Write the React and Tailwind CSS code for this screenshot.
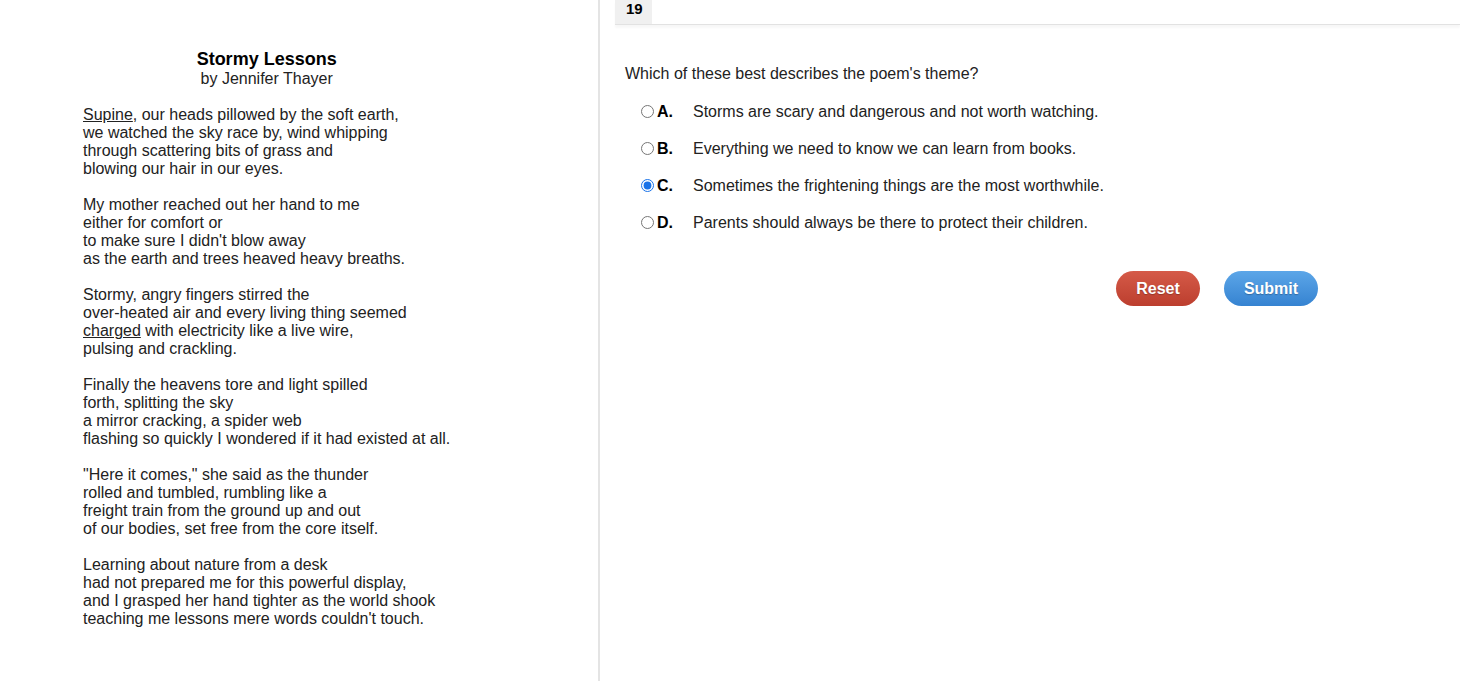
import React from "react";

const poemStanzas = [
  [
    <>
      <span className="underline">Supine</span>, our heads pillowed by the soft earth,
    </>,
    "we watched the sky race by, wind whipping",
    "through scattering bits of grass and",
    "blowing our hair in our eyes.",
  ],
  [
    "My mother reached out her hand to me",
    "either for comfort or",
    "to make sure I didn't blow away",
    "as the earth and trees heaved heavy breaths.",
  ],
  [
    "Stormy, angry fingers stirred the",
    "over-heated air and every living thing seemed",
    <>
      <span className="underline">charged</span> with electricity like a live wire,
    </>,
    "pulsing and crackling.",
  ],
  [
    "Finally the heavens tore and light spilled",
    "forth, splitting the sky",
    "a mirror cracking, a spider web",
    "flashing so quickly I wondered if it had existed at all.",
  ],
  [
    "\"Here it comes,\" she said as the thunder",
    "rolled and tumbled, rumbling like a",
    "freight train from the ground up and out",
    "of our bodies, set free from the core itself.",
  ],
  [
    "Learning about nature from a desk",
    "had not prepared me for this powerful display,",
    "and I grasped her hand tighter as the world shook",
    "teaching me lessons mere words couldn't touch.",
  ],
];

const answerOptions = [
  { letter: "A", text: "Storms are scary and dangerous and not worth watching." },
  { letter: "B", text: "Everything we need to know we can learn from books." },
  { letter: "C", text: "Sometimes the frightening things are the most worthwhile." },
  { letter: "D", text: "Parents should always be there to protect their children." },
];

const App = () => {
  const [Selected, setSelected] = React.useState("C");

  return (
    <div
      className="flex h-[681px] w-[1460px] overflow-hidden bg-white text-[#222]"
      style={{ fontFamily: '"Liberation Sans", Arial, sans-serif' }}
    >
      {/* passage */}
      <div className="h-full w-[600px] shrink-0 border-r-2 border-[#e4e4e4] pl-[83px] pt-[49px]">
        <div className="inline-block text-[16px] leading-[18px]">
          <div className="text-center">
            <div className="text-[18px] font-bold leading-[20px] text-black">Stormy Lessons</div>
            <div className="leading-[20px]">by Jennifer Thayer</div>
          </div>
          <div className="mt-[17px] flex flex-col gap-[18px]">
            {poemStanzas.map((stanza, k) => (
              <div key={k}>
                {stanza.map((line, i) => (
                  <div key={i} className="whitespace-nowrap">
                    {line}
                  </div>
                ))}
              </div>
            ))}
          </div>
        </div>
      </div>

      {/* question */}
      <div className="flex-1">
        <div className="ml-[15px] border-b border-[#e2e2e2] shadow-[0_3px_2px_rgba(0,0,0,0.03)]">
          <div className="h-[24px] w-[37px] bg-[#f0f0f0] pl-[11px] text-[15px] font-bold leading-[18px] text-black">
            19
          </div>
        </div>

        <div className="ml-[25px] mt-[40px] w-[693px]">
          <div className="text-[16px] leading-[18px]">Which of these best describes the poem's theme?</div>

          <div className="mt-[10px] flex flex-col">
            {answerOptions.map((opt) => (
              <label
                key={opt.letter}
                className="flex h-[37px] cursor-pointer items-center text-[16px]"
              >
                <input
                  type="radio"
                  name="answer"
                  value={opt.letter}
                  checked={Selected === opt.letter}
                  onChange={(e) => setSelected(e.target.value)}
                  className="m-0 ml-[16px] h-[13px] w-[13px] accent-[#1a73e8]"
                />
                <span className="ml-[3px] w-[36px] font-bold text-black">{opt.letter}.</span>
                <span>{opt.text}</span>
              </label>
            ))}
          </div>

          <div className="mt-[30px] flex justify-end gap-6">
            <button
              type="button"
              className="h-[35px] w-[84px] rounded-full bg-gradient-to-b from-[#d55a48] to-[#bc3e2e] text-[16px] font-bold text-white [text-shadow:0_1px_1px_rgba(0,0,0,0.25)]"
            >
              Reset
            </button>
            <button
              type="button"
              className="h-[35px] w-[94px] rounded-full bg-gradient-to-b from-[#5ca6e8] to-[#3583d1] text-[16px] font-bold text-white [text-shadow:0_1px_1px_rgba(0,0,0,0.25)]"
            >
              Submit
            </button>
          </div>
        </div>
      </div>
    </div>
  );
};

export default App;
